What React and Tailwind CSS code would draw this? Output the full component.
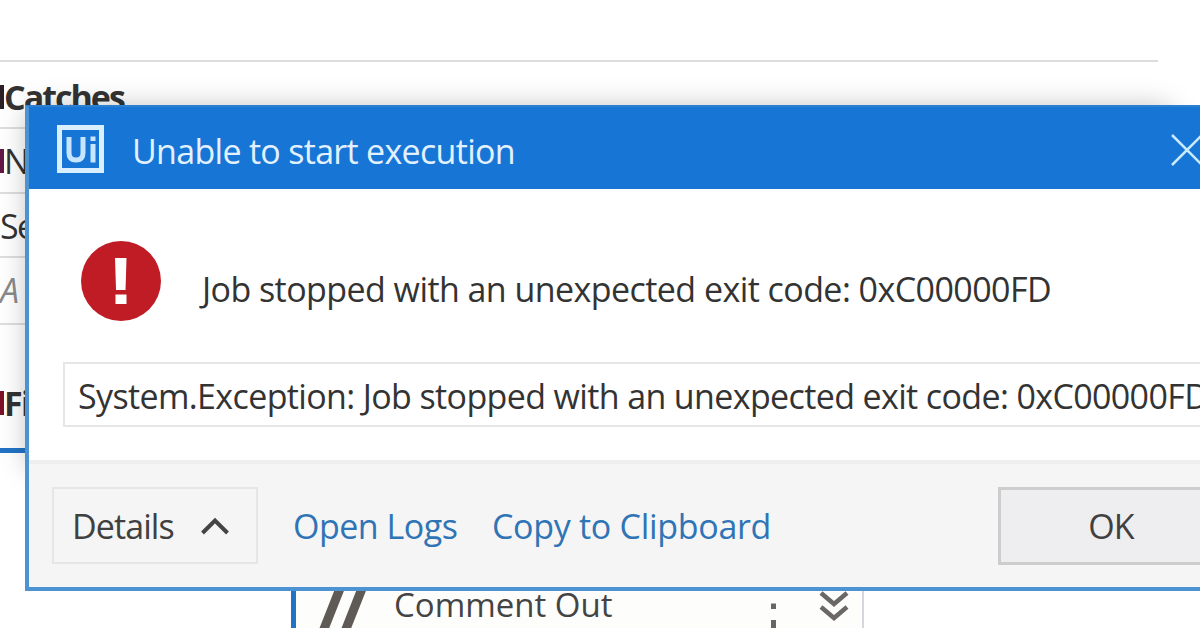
import React from 'react';

const TABLE_ROWS = [
  { label: 'Catches', style: 'h-[67px] pt-[8px] font-bold tracking-[-2px]', mark: 'bg-[#2b2027]' },
  { label: 'N', style: 'h-[65px] pt-[5px]', mark: 'bg-[#641846]' },
  { label: 'Se', style: 'h-16 pt-[5px] tracking-[-1.6px]' },
  { label: 'A', style: 'h-[67px] pt-[3px] italic text-[#8a8a8a]' },
];

const RowMark = ({ color }) => <span className={`h-6 w-[4px] shrink-0 ${color}`} />;

const UiLogo = () => (
  <svg className="mt-[2px] h-12 w-12 shrink-0" viewBox="0 0 48 48" fill="none">
    <rect x="2.5" y="2.5" width="42" height="43" stroke="#d9efff" strokeWidth="5" />
    <path d="M12 12V28Q12 35 19 35Q26 35 26 28V12" stroke="#c6e5ff" strokeWidth="5" />
    <path d="M36 19V37.500" stroke="#c6e5ff" strokeWidth="5" />
    <path d="M36 11.500V16" stroke="#c6e5ff" strokeWidth="5" />
  </svg>
);

const CloseIcon = () => (
  <svg className="mt-[3px] h-8 w-8 shrink-0" viewBox="0 0 32 32" fill="none" stroke="#c9ebff" strokeWidth="2.5">
    <path d="M1 1L31 31M31 1L1 31" />
  </svg>
);

const ErrorIcon = () => (
  <svg className="h-[82px] w-[82px] shrink-0" viewBox="0 0 82 82">
    <circle cx="41" cy="41" r="40" fill="#bf1c26" />
    <path d="M35 18H46.500L45.500 50H36Z" fill="#fff" />
    <rect x="35.500" y="54.500" width="11" height="9.500" fill="#fff" />
  </svg>
);

const ChevronUp = () => (
  <svg className="h-[18px] w-[28px] shrink-0" viewBox="0 0 28 18" fill="none" stroke="#444" strokeWidth="4">
    <path d="M1.500 16L14 3.500L26.500 16" />
  </svg>
);

const Workflow = () => (
  <div className="flex h-full flex-col">
    <div className="mt-[60px] h-[2px] w-[1158px] shrink-0 bg-[#dcdcdc]" />
    <div className="flex w-[1158px] shrink-0 flex-col">
      {TABLE_ROWS.map((row) => (
        <div key={row.label} className={`flex items-center overflow-hidden border-b-2 border-[#dedede] pb-1 text-[34px] leading-[48px] whitespace-nowrap ${row.style}`}>
          {row.mark && <RowMark color={row.mark} />}
          {row.label}
        </div>
      ))}
    </div>
    <div className="flex h-[128px] shrink-0 items-start border-b-[5px] border-[#2273c6] pt-[54px] text-[34px] leading-[48px] font-bold tracking-[-1.6px]">
      <span className="flex items-center">
        <RowMark color="bg-[#7c1228]" />
        Fi
      </span>
    </div>
    <div className="mt-[123px] ml-[291px] flex h-[52px] w-[573px] shrink-0 items-start border-r-2 border-l-[5px] border-r-[#d9d5dd] border-l-[#2273c6] bg-[#fdfdfc]">
      <svg className="ml-[22px] h-[52px] w-[48px]" viewBox="0 0 48 52" fill="none" stroke="#5f5a56" strokeWidth="9">
        <path d="M23 10L4 58M45 10L26 58" />
      </svg>
      <span className="mt-[5px] ml-[28px] w-[377px] text-[33px] leading-[48px] font-medium tracking-[0px] text-[#444]">Comment Out</span>
      <svg className="mt-[13px] h-[39px] w-[80px]" viewBox="0 0 80 39" fill="none">
        <path d="M2.500 14.500V20M2.500 31V39" stroke="#666" strokeWidth="5" />
        <path d="M50 4L63 15L76 4M50 18L63 29L76 18" stroke="#6b6764" strokeWidth="4.5" />
      </svg>
    </div>
  </div>
);

const ErrorDialog = () => (
  <div className="absolute top-[105px] left-[25px] flex h-[486px] w-[1300px] flex-col border-4 border-t-2 border-[#4c93d4] border-t-[#2f7fd0] bg-white">
    <div className="flex h-[82px] shrink-0 items-center bg-[#1775d6] pl-7">
      <UiLogo />
      <h1 className="mt-[5px] ml-[27px] w-[1039px] text-[34px] leading-[46px] tracking-[-0.7px] text-[#e2f1ff]">Unable to start execution</h1>
      <CloseIcon />
    </div>
    <div className="flex h-[271px] shrink-0 flex-col pt-[51px]">
      <div className="flex items-start pl-[51px]">
        <ErrorIcon />
        <p className="mt-[26px] ml-[40px] text-[34px] leading-[46px] tracking-[-0.56px] whitespace-nowrap">Job stopped with an unexpected exit code: 0xC00000FD</p>
      </div>
      <div className="mt-[40px] ml-[34px] h-[65px] border-2 border-[#e6e6e6] pt-[9px] pl-[13px] text-[34px] leading-[46px] tracking-[-0.63px] whitespace-nowrap">
        System.Exception: Job stopped with an unexpected exit code: 0xC00000FD
      </div>
    </div>
    <div className="flex grow items-center border-t-4 border-[#eeeeee] bg-[#f5f5f5] pl-[23px] text-[34px] leading-[46px]">
      <button className="flex h-[77px] w-[206px] items-center justify-between border-2 border-[#e6e6e6] pr-[27px] pl-[18px] tracking-[-0.9px] text-[#404040]">
        Details
        <ChevronUp />
      </button>
      <a className="ml-[35px] w-[165px] tracking-[-0.5px] whitespace-nowrap text-[#2f74b5]">Open Logs</a>
      <a className="ml-[34px] w-[506px] tracking-[-0.3px] text-[#2f74b5]">Copy to Clipboard</a>
      <button className="h-[78px] w-[226px] border-[3px] border-[#cdcdcd] bg-[#eeeef0] tracking-[-1px] text-[#404040]">OK</button>
    </div>
  </div>
);

const App = () => (
  <main className="relative h-[628px] w-[1200px] overflow-hidden bg-white font-['Open_Sans','Noto_Sans',sans-serif] text-[#333]">
    <Workflow />
    <div className="absolute top-[108px] left-[28px] h-[360px] w-[1142px] shadow-[0_0_26px_rgba(0,0,0,0.28)]" />
    <ErrorDialog />
  </main>
);

export default App;
